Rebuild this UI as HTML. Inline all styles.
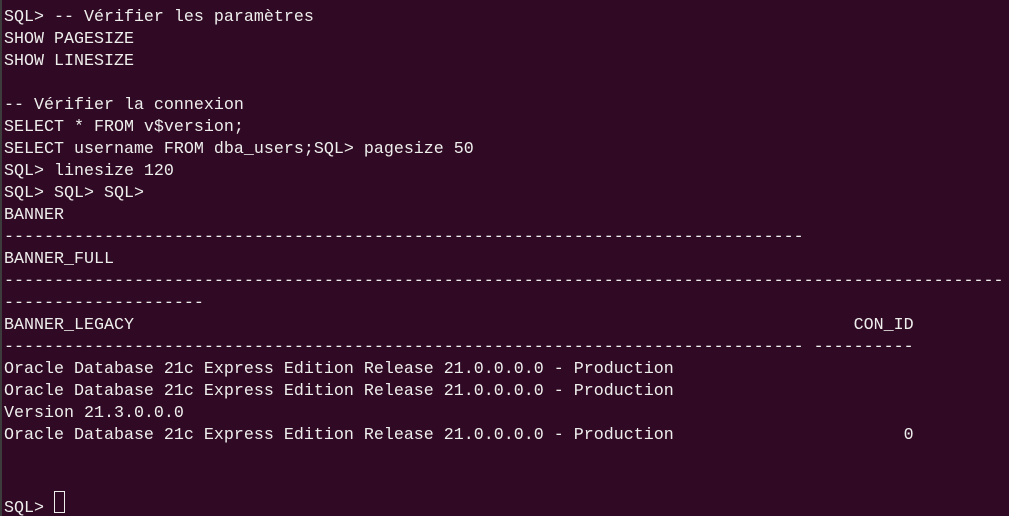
<!DOCTYPE html>
<html><head><meta charset="utf-8"><style>
html,body{margin:0;padding:0;background:#300a24;width:1009px;height:516px;overflow:hidden}
body{border-left:2px solid #3c3c3c;box-sizing:border-box}
pre{margin:0;padding:7px 0 0 2px;font-family:"Liberation Mono",monospace;font-size:16.67px;line-height:22px;color:#eeeeec;white-space:pre}
.cur{display:inline-block;border:1px solid #eeeeec;vertical-align:-1px;box-sizing:border-box;width:11px;height:22px}
</style></head><body><pre>SQL&gt; -- Vérifier les paramètres
SHOW PAGESIZE
SHOW LINESIZE

-- Vérifier la connexion
SELECT * FROM v$version;
SELECT username FROM dba_users;SQL&gt; pagesize 50
SQL&gt; linesize 120
SQL&gt; SQL&gt; SQL&gt;
BANNER
--------------------------------------------------------------------------------
BANNER_FULL
----------------------------------------------------------------------------------------------------
--------------------
BANNER_LEGACY                                                                        CON_ID
-------------------------------------------------------------------------------- ----------
Oracle Database 21c Express Edition Release 21.0.0.0.0 - Production
Oracle Database 21c Express Edition Release 21.0.0.0.0 - Production
Version 21.3.0.0.0
Oracle Database 21c Express Edition Release 21.0.0.0.0 - Production                       0


SQL&gt; <span class="cur"></span></pre></body></html>
